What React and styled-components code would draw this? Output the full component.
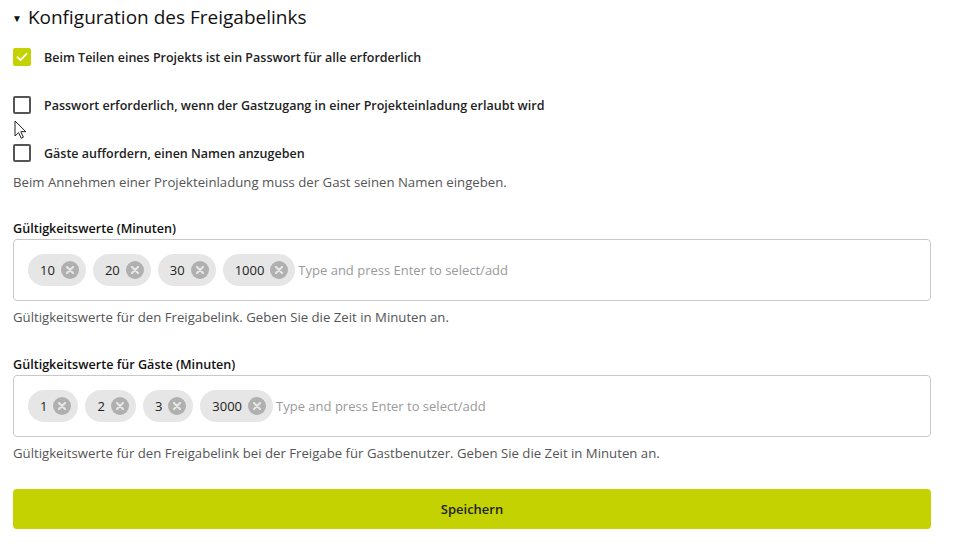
import styled, { createGlobalStyle } from 'styled-components'

const GlobalStyle = createGlobalStyle`
  body {
    margin: 0;
    background: #fff;
    font-family: "Open Sans", "Noto Sans", sans-serif;
    color: #222;
  }
`

const fields = [
  {
    label: 'Gültigkeitswerte (Minuten)',
    values: ['10', '20', '30', '1000'],
    help: 'Gültigkeitswerte für den Freigabelink. Geben Sie die Zeit in Minuten an.',
  },
  {
    label: 'Gültigkeitswerte für Gäste (Minuten)',
    values: ['1', '2', '3', '3000'],
    help: 'Gültigkeitswerte für den Freigabelink bei der Freigabe für Gastbenutzer. Geben Sie die Zeit in Minuten an.',
  },
]

const CheckIcon = () => (
  <svg width="14" height="14" viewBox="0 0 14 14">
    <path d="M2.5 7.2l3 3 6-6.4" fill="none" stroke="#fff" strokeWidth="1.8" strokeLinecap="round" strokeLinejoin="round" />
  </svg>
)

const RemoveIcon = () => (
  <svg width="18" height="18" viewBox="0 0 18 18">
    <circle cx="9" cy="9" r="9" fill="#b0b0b0" />
    <path d="M6 6l6 6M12 6l-6 6" stroke="#e6e6e6" strokeWidth="2.2" strokeLinecap="round" />
  </svg>
)

const Pointer = () => (
  <svg width="14" height="20" viewBox="0 0 14 20">
    <path d="M1 1v15l3.6-3.4 2.6 5.6 2.2-1-2.6-5.5h5z" fill="#fff" stroke="#222" strokeWidth="1" strokeLinejoin="round" />
  </svg>
)

const App = () => {
  return (
    <>
      <GlobalStyle />
      <Page>
        <Title>
          <Caret>▼</Caret>
          Konfiguration des Freigabelinks
        </Title>

        <Checks>
          <CheckRow>
            <Box checked><CheckIcon /></Box>
            <CheckLabel>Beim Teilen eines Projekts ist ein Passwort für alle erforderlich</CheckLabel>
          </CheckRow>
          <CheckRow>
            <Box />
            <CheckLabel>Passwort erforderlich, wenn der Gastzugang in einer Projekteinladung erlaubt wird</CheckLabel>
          </CheckRow>
          <CheckRow>
            <Box />
            <CheckLabel>Gäste auffordern, einen Namen anzugeben</CheckLabel>
            <Cursor><Pointer /></Cursor>
          </CheckRow>
        </Checks>
        <Help>Beim Annehmen einer Projekteinladung muss der Gast seinen Namen eingeben.</Help>

        {fields.map((field) => (
          <Field key={field.label}>
            <FieldLabel>{field.label}</FieldLabel>
            <TagInput>
              {field.values.map((v) => (
                <Chip key={v}>
                  {v}
                  <RemoveIcon />
                </Chip>
              ))}
              <Placeholder>Type and press Enter to select/add</Placeholder>
            </TagInput>
            <Help>{field.help}</Help>
          </Field>
        ))}

        <SaveButton>Speichern</SaveButton>
      </Page>
    </>
  )
}

const Page = styled.div`
  width: 918px;
  padding: 4px 0 0 13px;
  display: flex;
  flex-direction: column;
`

const Title = styled.h2`
  margin: 0 0 10px;
  display: flex;
  align-items: center;
  gap: 6px;
  font-size: 19px;
  font-weight: 400;
  color: #111;
  height: 25px;
`

const Caret = styled.span`
  font-size: 10px;
  margin-top: 2px;
  margin-left: -1px;
`

const Checks = styled.div`
  display: flex;
  flex-direction: column;
  gap: 28px;
  margin-top: 8px;
  margin-bottom: 10px;
`

const CheckRow = styled.label`
  position: relative;
  display: flex;
  align-items: center;
  gap: 13px;
  height: 20px;
`

const Box = styled.span`
  width: 18px;
  height: 18px;
  box-sizing: border-box;
  border-radius: 2px;
  display: flex;
  align-items: center;
  justify-content: center;
  background: ${(p) => (p.checked ? '#c3d200' : '#fff')};
  border: ${(p) => (p.checked ? 'none' : '2px solid #555')};
`

const CheckLabel = styled.span`
  font-size: 12.5px;
  font-weight: 600;
  color: #222;
`

const Cursor = styled.span`
  position: absolute;
  left: 1px;
  top: -23px;
`

const Help = styled.p`
  margin: 0;
  font-size: 13.2px;
  color: #555;
  line-height: 18px;
`

const Field = styled.div`
  margin-top: 29px;
  display: flex;
  flex-direction: column;

  & + & {
    margin-top: 30px;
  }
`

const FieldLabel = styled.div`
  font-size: 12.6px;
  font-weight: 600;
  color: #111;
  line-height: 18px;
  margin-bottom: 1px;
`

const TagInput = styled.div`
  box-sizing: border-box;
  height: 62px;
  border: 1px solid #c8c8c8;
  border-radius: 4px;
  padding: 0 14px;
  display: flex;
  align-items: center;
  gap: 7px;
  margin-bottom: 7px;
`

const Chip = styled.span`
  height: 32px;
  border-radius: 16px;
  background: #e6e6e6;
  display: flex;
  align-items: center;
  gap: 6px;
  padding: 0 7px 0 12px;
  font-size: 13px;
  color: #222;
`

const Placeholder = styled.span`
  font-size: 13px;
  color: #9a9a9a;
  margin-left: -4px;
`

const SaveButton = styled.button`
  margin-top: 27px;
  height: 40px;
  border: none;
  border-radius: 4px;
  background: #c3d200;
  font-family: inherit;
  font-size: 13px;
  font-weight: 600;
  color: #222;
`

export default App
